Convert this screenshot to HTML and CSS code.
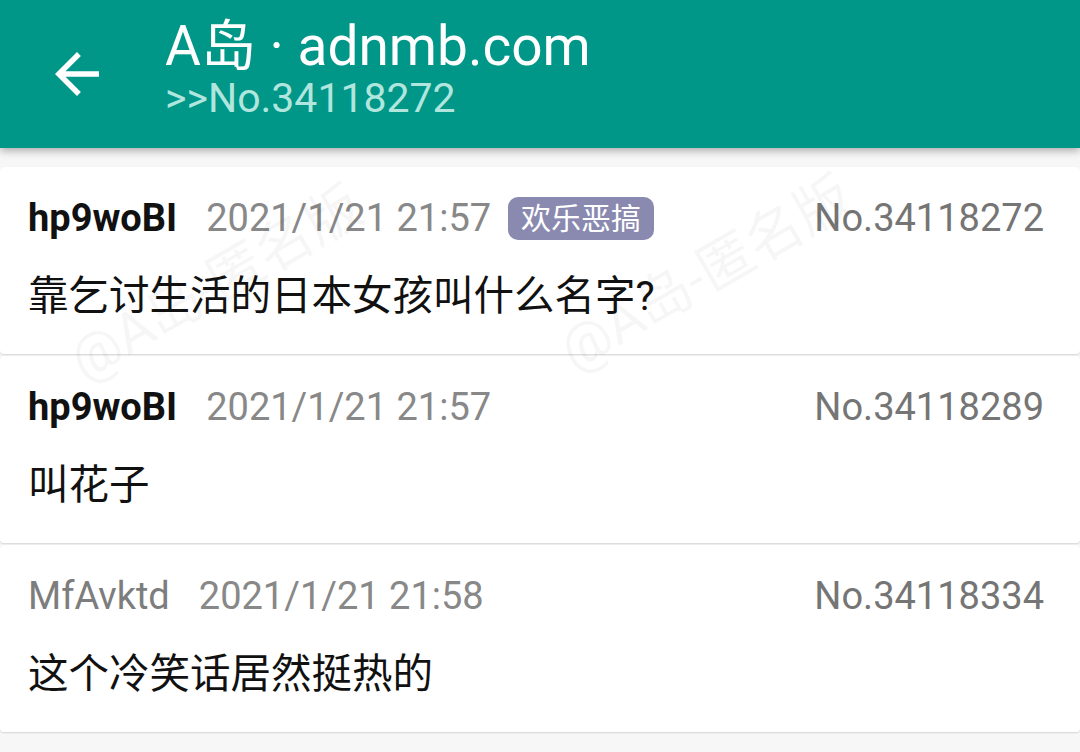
FILE: index.html
```html
<!DOCTYPE html>
<html lang="zh-CN">
<head>
  <meta charset="UTF-8" />
  <title>A岛 · adnmb.com</title>
  <link rel="stylesheet" href="styles.css">
</head>
<body>

<header class="toolbar">
  <svg class="back" width="66" height="66" viewBox="0 0 24 24">
    <path d="M20 11H7.83l5.59-5.59L12 4l-8 8 8 8 1.41-1.41L7.83 13H20v-2z" fill="#fff"/>
  </svg>
  <div class="titles">
    <div class="title">A岛 · adnmb.com</div>
    <div class="subtitle">&gt;&gt;No.34118272</div>
  </div>
</header>

<main class="list">
  <div class="card">
    <div class="meta">
      <span class="uid po">hp9woBI</span>
      <span class="time">2021/1/21 21:57</span>
      <span class="tag">欢乐恶搞</span>
      <span class="no">No.34118272</span>
    </div>
    <div class="content">靠乞讨生活的日本女孩叫什么名字?</div>
  </div>

  <div class="card">
    <div class="meta">
      <span class="uid po">hp9woBI</span>
      <span class="time">2021/1/21 21:57</span>
      <span class="no">No.34118289</span>
    </div>
    <div class="content">叫花子</div>
  </div>

  <div class="card">
    <div class="meta">
      <span class="uid">MfAvktd</span>
      <span class="time">2021/1/21 21:58</span>
      <span class="no">No.34118334</span>
    </div>
    <div class="content">这个冷笑话居然挺热的</div>
  </div>

  <div class="mark m1">@A岛-匿名版</div>
  <div class="mark m2">@A岛-匿名版</div>
</main>

</body>
</html>
```

FILE: styles.css
```css
body {
  margin: 0;
  background: #f7f7f7;
  font-family: Roboto, "Noto Sans CJK SC", sans-serif;
  overflow: hidden;
}
.toolbar {
  height: 148px;
  background: #009688;
  display: flex;
  align-items: center;
  box-shadow: 0 3px 8px rgba(0,0,0,0.3);
  position: relative;
  z-index: 2;
}
.back {
  margin-left: 44px;
  margin-right: 55px;
}
.titles {
  margin-top: -11px;
}
.title {
  color: #fff;
  font-size: 55px;
  line-height: 58px;
}
.subtitle {
  color: #b0e6dd;
  font-size: 41px;
  line-height: 46px;
}
.list {
  padding-top: 19px;
  position: relative;
}
.card {
  background: #fff;
  height: 187px;
  box-sizing: border-box;
  padding: 30px 36px 0 28px;
  margin-bottom: 2px;
  border-radius: 4px;
  box-shadow: 0 1px 2px rgba(0,0,0,0.14);
}
.meta {
  display: flex;
  align-items: center;
  height: 42px;
}
.uid {
  font-size: 38px;
  color: #7d7d7d;
  margin-right: 29px;
}
.uid.po {
  color: #111;
  font-weight: bold;
}
.time {
  font-size: 38px;
  color: #888;
}
.tag {
  margin-left: 17px;
  background: #8a8ab0;
  color: #fff;
  font-size: 30px;
  line-height: 43px;
  padding: 0 13px;
  border-radius: 10px;
}
.no {
  margin-left: auto;
  font-size: 38px;
  color: #757575;
}
.content {
  margin-top: 33px;
  font-size: 40.5px;
  line-height: 48px;
  color: #111;
}
.mark {
  position: absolute;
  font-size: 56px;
  color: rgba(0,0,0,0.035);
  transform: rotate(-30deg);
  white-space: nowrap;
  pointer-events: none;
}
.m1 { left: 50px; top: 90px; }
.m2 { left: 540px; top: 80px; }
```
